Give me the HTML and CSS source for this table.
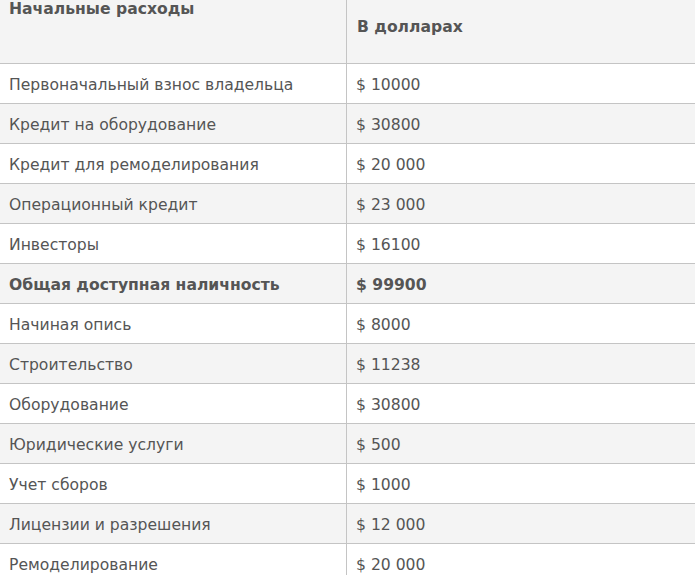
FILE: index.html
```html
<!DOCTYPE html>
<html lang="ru">
<head>
<meta charset="utf-8">
<link rel="stylesheet" href="styles.css">
</head>
<body>
<table class="costs">
  <thead>
    <tr>
      <th class="h-left">Начальные расходы</th>
      <th class="h-right">В долларах</th>
    </tr>
  </thead>
  <tbody>
    <tr><td>Первоначальный взнос владельца</td><td>$ 10000</td></tr>
    <tr><td>Кредит на оборудование</td><td>$ 30800</td></tr>
    <tr><td>Кредит для ремоделирования</td><td>$ 20 000</td></tr>
    <tr><td>Операционный кредит</td><td>$ 23 000</td></tr>
    <tr><td>Инвесторы</td><td>$ 16100</td></tr>
    <tr class="total"><td>Общая доступная наличность</td><td>$ 99900</td></tr>
    <tr><td>Начиная опись</td><td>$ 8000</td></tr>
    <tr><td>Строительство</td><td>$ 11238</td></tr>
    <tr><td>Оборудование</td><td>$ 30800</td></tr>
    <tr><td>Юридические услуги</td><td>$ 500</td></tr>
    <tr><td>Учет сборов</td><td>$ 1000</td></tr>
    <tr><td>Лицензии и разрешения</td><td>$ 12 000</td></tr>
    <tr><td>Ремоделирование</td><td>$ 20 000</td></tr>
  </tbody>
</table>
</body>
</html>
```
FILE: styles.css
```css
html, body {
  margin: 0;
  padding: 0;
  background: #fff;
}
body {
  font-family: "DejaVu Sans", Verdana, sans-serif;
  font-size: 15.6px;
  color: #555;
}
.costs {
  border-collapse: collapse;
  width: 700px;
  table-layout: fixed;
}
.costs th, .costs td {
  border: 1px solid #c4c4c4;
  text-align: left;
  padding: 2px 10px 0 9px;
  height: 37px;
  line-height: 18px;
}
.costs tr > :first-child {
  width: 327px;
  border-left: none;
}
.costs th {
  background: #f4f4f4;
  font-weight: bold;
  border-top: none;
  vertical-align: top;
}
.costs .h-left {
  height: 63px;
  padding-top: 0;
}
.costs .h-right {
  height: 45px;
  padding-top: 18px;
  padding-left: 10px;
}
.costs tbody tr:nth-child(even) td {
  background: #f4f4f4;
}
.costs .total td {
  font-weight: bold;
}
```
